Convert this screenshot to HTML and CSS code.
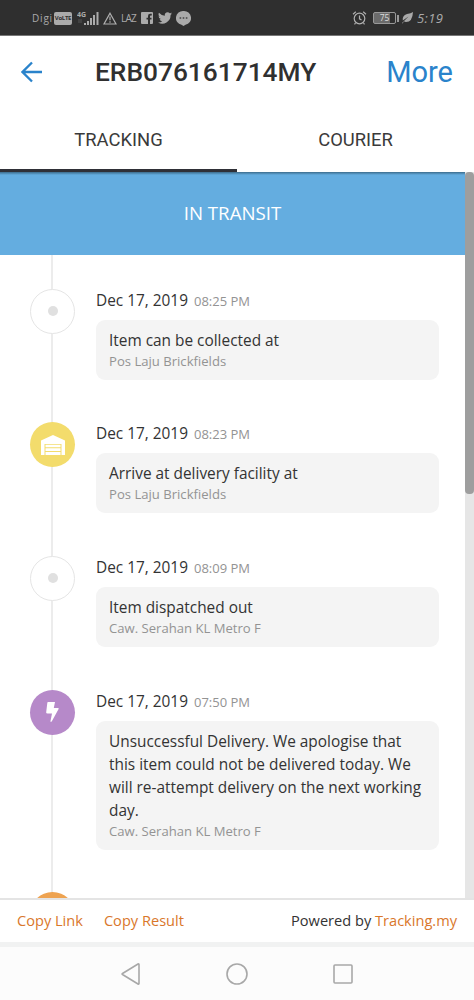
FILE: index.html
```html
<!DOCTYPE html>
<html lang="en">
<head>
<meta charset="utf-8">
<title>Tracking</title>
<link rel="stylesheet" href="styles.css">
</head>
<body>
<div class="phone">
  <div class="status">
    <span class="carrier">Digi</span>
    <span class="volte">VoLTE</span>
    <svg class="signal" width="23" height="18" viewBox="0 0 23 18"><text x="0" y="8" class="gen">4G</text><path d="M1 11h4M1 13h4" class="dim"/><path d="M8 16v-2M11 16v-4M14 16V9M17 16V6M20.500 16V3" class="bars"/></svg>
    <svg class="warn" width="14" height="13" viewBox="0 0 14 13"><path d="M7 1.200L13 12H1z" class="line"/><path d="M7 4.500v3.700M7 9.200v1.500" class="line"/></svg>
    <span class="laz">LAZ</span>
    <svg class="fb" width="12" height="12" viewBox="0 0 12 12"><path fill-rule="evenodd" d="M1 0h10a1 1 0 0 1 1 1v10a1 1 0 0 1-1 1H9V7.500h1.500V5.700H9V4.300q0-.8.800-.8h1V1.700H9.200Q7 1.700 7 4v1.700H5.500v1.800H7V12H1a1 1 0 0 1-1-1V1a1 1 0 0 1 1-1z"/></svg>
    <svg class="bird" width="14" height="12" viewBox="0 0 24 20"><path d="M24 2.400a10 10 0 0 1-2.800.8A5 5 0 0 0 23.300.500a10 10 0 0 1-3.100 1.200 4.900 4.900 0 0 0-8.400 4.500A14 14 0 0 1 1.700 1.100a4.900 4.900 0 0 0 1.500 6.500 5 5 0 0 1-2.200-.6 4.900 4.900 0 0 0 3.900 4.900 5 5 0 0 1-2.200.1 4.900 4.900 0 0 0 4.600 3.400A10 10 0 0 1 0 17.500 14 14 0 0 0 21.500 5a10 10 0 0 0 2.500-2.600z"/></svg>
    <svg class="chat" width="15" height="15" viewBox="0 0 15 15"><path d="M7.500 0a7.300 7 0 0 1 2 13.800L7.500 15l-2-1.200A7.300 7 0 0 1 7.500 0z"/><path d="M3.600 7h1.600M6.700 7h1.600M9.800 7h1.600" class="dots"/></svg>
    <svg class="alarm" width="15" height="14" viewBox="0 0 15 14"><circle cx="7.500" cy="7.500" r="5.300" class="line"/><path d="M7.500 4.500v3.300l2 1.200M1 3.200l2.800-2.400M14 3.200L11.200.8M3.500 12l-1 1.400M11.500 12l1 1.400" class="line"/></svg>
    <span class="battery"><span>75</span></span>
    <svg class="leaf" width="11" height="12" viewBox="0 0 11 12"><path d="M11 0Q10.500 10 4 10 2.800 10 2 9.300L.700 11.500 0 11 6.500 4.500.8 8.600Q0 3.500 5 2 9 1.500 11 0z"/></svg>
    <span class="clock">5:19</span>
  </div>
  <header class="header">
    <svg class="back" width="22" height="22" viewBox="0 0 22 22"><path d="M21 11H1.500M11 1.500L1.500 11l9.500 9.500"/></svg>
    <h1 class="title">ERB076161714MY</h1>
    <span class="more">More</span>
  </header>
  <nav class="tabs"><span class="tab active">TRACKING</span><span class="tab">COURIER</span></nav>
  <main class="view">
    <div class="content">
      <div class="banner">IN TRANSIT</div>
      <div class="timeline">
        <section class="event">
          <div class="badge plain"></div>
          <div class="info"><div class="when">Dec 17, 2019 <span class="time">08:25 PM</span></div>
            <div class="card"><div class="msg">Item can be collected at</div><div class="place">Pos Laju Brickfields</div></div></div>
        </section>
        <section class="event">
          <div class="badge yellow"><svg width="24" height="20" viewBox="0 0 24 20"><path d="M0 20V5.500L12 0l12 5.500V20h-3.500V9h-17v11z"/><path d="M4.500 9.700h15v2.600h-15zM4.500 13.300h15v2.700h-15zM4.500 17h15v3h-15z"/></svg></div>
          <div class="info"><div class="when">Dec 17, 2019 <span class="time">08:23 PM</span></div>
            <div class="card"><div class="msg">Arrive at delivery facility at</div><div class="place">Pos Laju Brickfields</div></div></div>
        </section>
        <section class="event">
          <div class="badge plain"></div>
          <div class="info"><div class="when">Dec 17, 2019 <span class="time">08:09 PM</span></div>
            <div class="card"><div class="msg">Item dispatched out</div><div class="place">Caw. Serahan KL Metro F</div></div></div>
        </section>
        <section class="event">
          <div class="badge purple"><svg width="13" height="20" viewBox="0 0 13 20"><path d="M2 0h7L7.800 6H12q1 0 .6 1L6 19q-1.500 2-1.500 0L6 11.500H1.500Q0 11.500.200 10.200L1.300 1Q1.400 0 2 0z"/></svg></div>
          <div class="info"><div class="when">Dec 17, 2019 <span class="time">07:50 PM</span></div>
            <div class="card"><div class="msg">Unsuccessful Delivery. We apologise that this item could not be delivered today. We will re-attempt delivery on the next working day.</div><div class="place">Caw. Serahan KL Metro F</div></div></div>
        </section>
        <section class="event"><div class="badge orange"></div></section>
      </div>
    </div>
    <div class="scroll"><div class="thumb"></div></div>
  </main>
  <footer class="footer"><span class="link">Copy Link</span><span class="link">Copy Result</span><span class="powered">Powered by <span class="link">Tracking.my</span></span></footer>
  <div class="keys">
    <svg width="20" height="24" viewBox="0 0 20 24"><path d="M18 2.500v19q0 1-1 .5L1.500 12.500q-.8-.5 0-1L17 2q1-.5 1 .5z"/></svg>
    <svg width="24" height="24" viewBox="0 0 24 24"><circle cx="12" cy="12" r="10"/></svg>
    <svg width="20" height="20" viewBox="0 0 20 20"><rect x="1" y="1" width="18" height="18" rx="1"/></svg>
  </div>
</div>
</body>
</html>
```
FILE: styles.css
```css
* { box-sizing: border-box; }
body { margin: 0; background: #fff; color: #333; font-family: "Open Sans", "Noto Sans", sans-serif; }
svg { display: block; flex: none; }
.phone { width: 474px; height: 1000px; overflow: hidden; display: flex; flex-direction: column; }
.status { height: 36px; flex: none; background: #2f2f2f; border-bottom: 1px solid #777; display: flex; align-items: center; padding: 1px 29px 0 32px; color: #aaa; fill: #aaa; font-size: 11px; }
.line { fill: none; stroke: #b0b0b0; stroke-width: 1.2; }
.carrier { width: 22px; font-size: 10px; letter-spacing: .8px; }
.volte { width: 18px; height: 13px; border-radius: 2px; background: #aaa; color: #2f2f2f; font: 700 6px/13px "Open Sans", sans-serif; text-align: center; letter-spacing: -.3px; }
.signal { margin-left: 5px; }
.gen { font: 700 7px "Open Sans", sans-serif; }
.bars { stroke: #aaa; stroke-width: 2; }
.dim { stroke: #555; stroke-width: 1; }
.warn { margin-left: 3px; }
.laz { width: 16px; margin-left: 4px; font-size: 10px; letter-spacing: -.8px; white-space: nowrap; }
.fb { margin-left: 4px; }
.bird { margin-left: 5px; }
.chat { margin-left: 4px; }
.dots { stroke: #444; stroke-width: 1.5; }
.alarm { margin-left: auto; }
.battery { width: 23px; height: 12px; margin-left: 6px; border: 1px solid #999; border-radius: 2px; position: relative; background: linear-gradient(90deg, #6b6b6b 76%, #2f2f2f 76%); font-size: 8.5px; line-height: 10px; text-align: center; color: #ddd; }
.battery::after { content: ""; position: absolute; right: -4px; top: 2px; width: 2px; height: 7px; background: #999; }
.leaf { margin-left: 6px; }
.clock { width: 28px; margin-left: 4px; font: italic 400 13px/16px "Open Sans", sans-serif; letter-spacing: .4px; white-space: nowrap; }
.header { height: 72px; flex: none; display: flex; align-items: center; padding: 0 21px; font-family: Roboto, sans-serif; }
.back { fill: none; stroke: #2a83cb; stroke-width: 2.3; }
.title { margin: 0 0 0 52px; font-size: 26.3px; font-weight: 500; color: #303030; }
.more { margin-left: auto; font-size: 29px; color: #2a83cb; }
.tabs { height: 64px; flex: none; display: flex; font: 18.4px/64px Roboto, sans-serif; color: #3a3a3a; text-align: center; }
.tab { flex: 1; }
.active { border-bottom: 3px solid #2f3037; }
.view { height: 726px; flex: none; display: flex; overflow: hidden; }
.content { flex: 1; }
.banner { height: 82.500px; line-height: 82px; background: linear-gradient(#3c6c8c, #64ade0 3px); color: #fff; font-size: 18.7px; text-align: center; }
.timeline { padding: 34.300px 26px 0 30px; background: linear-gradient(#ececec, #ececec) 51px 0 / 2px 100% no-repeat; }
.event { display: flex; gap: 21px; margin-bottom: 42.600px; }
.badge { width: 45px; height: 45px; flex: none; border-radius: 50%; display: flex; align-items: center; justify-content: center; fill: #fff; }
.plain { background: #fff; border: 1.500px solid #e5e5e5; }
.plain::after { content: ""; width: 10px; height: 10px; border-radius: 50%; background: #e0e0e0; }
.yellow { background: #f3dc6c; }
.purple { background: #b689c9; }
.orange { background: #eea351; }
.info { flex: 1; }
.when { height: 31px; font-size: 15.4px; line-height: 23px; white-space: nowrap; }
.time { margin-left: 2px; font-size: 13px; color: #939393; }
.card { border-radius: 9px; background: #f4f4f4; padding: 9px 13px; }
.msg { font-size: 15.4px; line-height: 23px; }
.place { font-size: 13.1px; line-height: 19px; color: #939393; }
.scroll { width: 9px; background: #e6e6e6; }
.thumb { height: 322px; border-radius: 4px; background: #9e9e9e; }
.footer { height: 44px; flex: none; border-top: 2px solid #e4e4e4; display: flex; align-items: center; gap: 21px; padding: 0 17px 2px; font-size: 14.6px; }
.link { color: #d9772b; }
.powered { margin-left: auto; }
.keys { flex: 1; border-top: 5px solid #f1f2f2; background: #fcfcfc; display: flex; align-items: center; justify-content: center; gap: 84px; padding-top: 1px; }
.keys svg { fill: none; stroke: #a8a8a8; stroke-width: 1.6; }
```
